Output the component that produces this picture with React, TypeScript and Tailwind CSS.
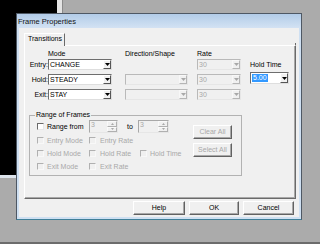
import React from "react";

function Tri({ up = false, color = "#000", w = 5, h = 3 }: { up?: boolean; color?: string; w?: number; h?: number }) {
  return (
    <svg width={w} height={h} viewBox={`0 0 ${w} ${h}`} className="block">
      <path d={up ? `M0 ${h}H${w}L${w / 2} 0Z` : `M0 0H${w}L${w / 2} ${h}Z`} fill={color} />
    </svg>
  );
}

function Combo({ className, text, disabled, selected }: { className: string; text?: string; disabled?: boolean; selected?: boolean }) {
  return (
    <div
      className={`flex border ${
        disabled
          ? "border-t-[#b9b9b9] border-l-[#b9b9b9] border-r-[#e6e6e6] border-b-[#e6e6e6] bg-[#f0f0f0]"
          : "border-t-[#6e6e6e] border-l-[#6e6e6e] border-r-[#dedede] border-b-[#dedede] bg-white"
      } ${className}`}
    >
      <div className={`flex-1 flex items-center pl-[1px] text-[7px] leading-[8px] ${disabled ? "text-[#a8a8a8]" : "text-black"}`}>
        {selected ? <span className="bg-[#3399ff] text-white px-[1px]">{text}</span> : text}
      </div>
      <div
        className={`w-[8px] flex items-center justify-center border bg-[#f0f0f0] ${
          disabled
            ? "border-t-[#f8f8f8] border-l-[#f8f8f8] border-r-[#b5b5b5] border-b-[#b5b5b5]"
            : "border-t-white border-l-white border-r-[#555] border-b-[#555]"
        }`}
      >
        <Tri color={disabled ? "#a8a8a8" : "#000"} />
      </div>
    </div>
  );
}

function Check({ disabled }: { disabled?: boolean }) {
  return (
    <div
      className={`w-[7px] h-[7px] shrink-0 border ${
        disabled
          ? "border-t-[#b0b0b0] border-l-[#b0b0b0] border-r-[#f8f8f8] border-b-[#f8f8f8] bg-[#f0f0f0]"
          : "border-t-[#6a6a6a] border-l-[#6a6a6a] border-r-[#e8e8e8] border-b-[#e8e8e8] bg-white"
      }`}
    />
  );
}

function CheckItem({ label, disabled, className, gap }: { label: string; disabled?: boolean; className: string; gap: string }) {
  return (
    <div className={`flex items-center ${className}`}>
      <Check disabled={disabled} />
      <span className={`${gap} text-[7px] leading-[8px] whitespace-nowrap ${disabled ? "text-[#a8a8a8]" : "text-black"}`}>{label}</span>
    </div>
  );
}

function Spin({ className }: { className: string }) {
  return (
    <div className={`flex h-[13px] border border-t-[#a8a8a8] border-l-[#a8a8a8] border-r-[#e6e6e6] border-b-[#e6e6e6] bg-[#f0f0f0] ${className}`}>
      <div className="flex-1 pl-[1px] text-[7px] leading-[8px] text-[#a8a8a8]">3</div>
      <div className="w-[10px] flex flex-col">
        <div className="flex-1 flex items-center justify-center border border-t-[#fafafa] border-l-[#fafafa] border-r-[#b0b0b0] border-b-[#b0b0b0]">
          <Tri up color="#a8a8a8" w={3} h={2} />
        </div>
        <div className="flex-1 flex items-center justify-center border border-t-[#fafafa] border-l-[#fafafa] border-r-[#b0b0b0] border-b-[#b0b0b0]">
          <Tri color="#a8a8a8" w={3} h={2} />
        </div>
      </div>
    </div>
  );
}

function Btn({ label, className, disabled }: { label: string; className: string; disabled?: boolean }) {
  return (
    <div
      className={`flex items-center justify-center bg-[#f0f0f0] border border-t-white border-l-white border-r-[#626262] border-b-[#626262] shadow-[inset_-1px_-1px_0_#a8a8a8] text-[7px] leading-[8px] ${
        disabled ? "text-[#a8a8a8]" : "text-black"
      } ${className}`}
    >
      {label}
    </div>
  );
}

export default function App() {
  return (
    <div className="relative w-[320px] h-[244px] overflow-hidden bg-[#ababab] font-['Liberation_Sans',Arial,sans-serif]">
      {/* background windows */}
      <div className="absolute left-0 top-0 w-[57px] h-[175px] bg-black" />
      <div className="absolute left-[57px] top-0 w-[6px] h-[14px] bg-[#e4e4e4] border-r border-[#8a8a8a]" />
      <div className="absolute left-0 top-[175px] w-[17px] h-[3px] bg-[#dde4ec]" />
      <div className="absolute left-0 bottom-0 w-full h-[2px] bg-[#6c6c6c]" />

      {/* dialog */}
      <div className="absolute left-[16px] top-[13px] w-[286px] h-[207px] border border-[#4e5864] border-b-[#3f7f98] bg-[#cfe0f2] flex flex-col">
        <div className="h-[14px] shrink-0 bg-gradient-to-b from-[#b2cce8] to-[#d3e2f3] pl-[1px] pt-[3px] text-[7.5px] leading-[9px] text-[#141414]">
          Frame Properties
        </div>
        <div className="mx-[2px] h-[189px] bg-[#f0f0f0] flex flex-col">
          {/* tab control */}
          <div className="ml-[5px] mt-[5px] w-[272px] flex flex-col">
            <div className="flex h-[13px]">
              <div className="w-[41px] h-[13px] border-t border-l border-white border-r border-r-[#6a6a6a] pl-[3px] pt-[1px] text-[7px] leading-[8px] text-black">
                Transitions
              </div>
              <div className="flex-1 border-b border-white border-r border-r-[#6a6a6a] mt-[10px]" />
            </div>
            <div className="h-[153px] border-l border-white border-r border-r-[#6a6a6a] border-b border-b-[#6a6a6a] shadow-[inset_-1px_-1px_0_#a8a8a8] flex flex-col">
              <div className="flex pt-[3px]">
                <div className="flex flex-col">
                  <div className="flex h-[10px] text-[7px] leading-[10px] text-black">
                    <div className="w-[23px]" />
                    <div className="w-[77px]">Mode</div>
                    <div className="w-[72px]">Direction/Shape</div>
                    <div>Rate</div>
                  </div>
                  <div className="flex flex-col gap-[4px]">
                    <div className="flex h-[11px]">
                      <div className="w-[23px] text-right text-[7px] leading-[11px] text-black">Entry:</div>
                      <Combo className="w-[64px]" text="CHANGE" />
                      <div className="w-[63px] ml-[13px]" />
                      <Combo className="w-[44px] ml-[9px]" text="30" disabled />
                    </div>
                    <div className="flex h-[11px]">
                      <div className="w-[23px] text-right text-[7px] leading-[11px] text-black">Hold:</div>
                      <Combo className="w-[64px]" text="STEADY" />
                      <Combo className="w-[63px] ml-[13px]" disabled />
                      <Combo className="w-[44px] ml-[9px]" text="30" disabled />
                    </div>
                    <div className="flex h-[11px]">
                      <div className="w-[23px] text-right text-[7px] leading-[11px] text-black">Exit:</div>
                      <Combo className="w-[64px]" text="STAY" />
                      <Combo className="w-[63px] ml-[13px]" disabled />
                      <Combo className="w-[44px] ml-[9px]" text="30" disabled />
                    </div>
                  </div>
                </div>
                <div className="ml-[9px] pt-[12px] flex flex-col">
                  <div className="text-[7px] leading-[8px] text-black">Hold Time</div>
                  <Combo className="w-[39px] h-[12px] mt-[3px]" text="5.00" selected />
                </div>
              </div>

              {/* Range of Frames */}
              <fieldset className="ml-[4px] mt-[11px] w-[213px] border border-[#b2b2b2]">
                <legend className="ml-[5px] px-[1px] text-[7px] leading-[8px] text-black">Range of Frames</legend>
                <div className="flex pb-[2px]">
                  <div className="flex flex-col pl-[7px] pt-[1px]">
                    <div className="flex items-center h-[13px]">
                      <CheckItem label="Range from" className="w-[52px]" gap="ml-[3px]" />
                      <Spin className="w-[29px]" />
                      <div className="ml-[9px] w-[11px] text-[7px] leading-[8px] text-black">to</div>
                      <Spin className="w-[31px]" />
                    </div>
                    <div className="flex items-center h-[13px] mt-[1px]">
                      <CheckItem label="Entry Mode" disabled className="w-[52px]" gap="ml-[3px]" />
                      <CheckItem label="Entry Rate" disabled className="w-[51px]" gap="ml-[4px]" />
                    </div>
                    <div className="flex items-center h-[13px]">
                      <CheckItem label="Hold Mode" disabled className="w-[52px]" gap="ml-[3px]" />
                      <CheckItem label="Hold Rate" disabled className="w-[51px]" gap="ml-[4px]" />
                      <CheckItem label="Hold Time" disabled className="" gap="ml-[3px]" />
                    </div>
                    <div className="flex items-center h-[13px]">
                      <CheckItem label="Exit Mode" disabled className="w-[52px]" gap="ml-[3px]" />
                      <CheckItem label="Exit Rate" disabled className="w-[51px]" gap="ml-[4px]" />
                    </div>
                  </div>
                  <div className="ml-auto mr-[9px] pt-[6px] flex flex-col gap-[4px]">
                    <Btn label="Clear All" className="w-[39px] h-[14px]" disabled />
                    <Btn label="Select All" className="w-[39px] h-[14px]" disabled />
                  </div>
                </div>
              </fieldset>
            </div>
          </div>

          {/* bottom buttons */}
          <div className="mt-[2px] flex justify-end gap-[4px] pr-[5px]">
            <Btn label="Help" className="w-[52px] h-[14px]" />
            <Btn label="OK" className="w-[50px] h-[14px]" />
            <Btn label="Cancel" className="w-[51px] h-[14px]" />
          </div>
        </div>
      </div>
    </div>
  );
}
